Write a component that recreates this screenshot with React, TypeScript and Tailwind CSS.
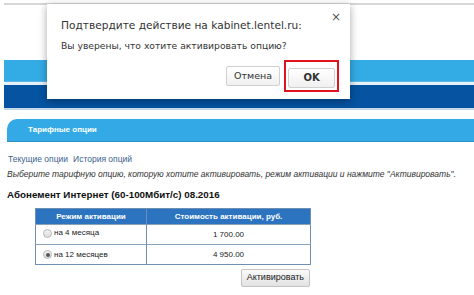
import React from 'react';

const rows = [
    { label: 'на 4 месяца', price: '1 700.00', checked: false },
    { label: 'на 12 месяцев', price: '4 950.00', checked: true },
];

const Radio = ({ checked }: { checked: boolean }) => (
    <span className="inline-flex w-[9px] h-[9px] rounded-full border border-[#b8b8b8] bg-gradient-to-b from-[#f4f4f4] to-[#dcdcdc] items-center justify-center mr-[2px]">
        {checked && <span className="w-[4px] h-[4px] rounded-full bg-[#555]" />}
    </span>
);

const ConfirmDialog = () => (
    <div className="absolute left-[47px] top-[4px] w-[303px] h-[95px] bg-white shadow-[0_2px_8px_rgba(0,0,0,0.35)] font-['DejaVu_Sans',sans-serif] text-[#333]">
        <div className="absolute right-[9px] top-[7px] text-[12px] text-[#555] leading-none">×</div>
        <div className="pl-[14px] pt-[14px] text-[10.6px] leading-[14px] whitespace-nowrap">Подтвердите действие на kabinet.lentel.ru:</div>
        <div className="pl-[14px] pt-[8px] text-[9.2px] leading-[12px] whitespace-nowrap">Вы уверены, что хотите активировать опцию?</div>
        <div className="absolute right-[11px] top-[56px] flex items-center gap-[4px]">
            <button className="w-[54px] h-[20px] rounded-[2px] border border-[#d0d0d0] bg-gradient-to-b from-white to-[#f0f0f0] text-[9.5px] text-[#333]">
                Отмена
            </button>
            <div className="border-2 border-[#e0141e] p-[2px]">
                <button className="w-[47px] h-[20px] rounded-[2px] border border-[#d0d0d0] bg-gradient-to-b from-white to-[#f0f0f0] text-[10px] font-bold text-[#333]">
                    OK
                </button>
            </div>
        </div>
    </div>
);

export default function App() {
    return (
        <div className="relative w-[474px] h-[295px] bg-white overflow-hidden font-['Liberation_Sans',Arial,sans-serif]">
            <div className="pl-[4px] pt-[3px]">
                <div className="h-[2px] bg-[#d6d6d6]" />
                <div className="h-[55px]" />
                <div className="h-[22px] bg-[#33ace6] border-b border-[#5cb8e4]" />
                <div className="h-[3px] bg-[#e6f1f8]" />
                <div className="h-[23px] bg-[#0553a1]" />
                <div className="h-[2px] bg-[#c5d9ea]" />
            </div>

            <div className="pl-[7px] pt-[9px]">
                <div className="h-[23px] bg-[#33aae5] border-b border-[#2990c8] rounded-tl-[10px] flex items-center pl-[21px] text-white font-bold text-[8px]">
                    Тарифные опции
                </div>
            </div>

            <div className="pl-[8px] pt-[11px] text-[8.5px] text-[#3c5f8e] leading-[12px] flex gap-[5px]">
                <span>Текущие опции</span>
                <span>История опций</span>
            </div>
            <div className="pl-[7px] pt-[3px] text-[8.5px] italic text-[#333] leading-[12px] whitespace-nowrap">
                Выберите тарифную опцию, которую хотите активировать, режим активации и нажмите "Активировать".
            </div>
            <div className="pl-[7px] pt-[8px] text-[9.8px] font-bold text-[#111] leading-[14px]">
                Абонемент Интернет (60-100Мбит/с) 08.2016
            </div>

            <div className="pl-[35px] pt-[6px] w-[311px]">
                <table className="w-[276px] border-collapse border border-[#6d8fb3] text-[8px] text-[#222]">
                    <thead>
                        <tr className="h-[16px] bg-[#2c74bf] text-white">
                            <th className="w-[111px] border-r border-[#6d8fb3] font-bold">Режим активации</th>
                            <th className="font-bold">Стоимость активации, руб.</th>
                        </tr>
                    </thead>
                    <tbody>
                        {rows.map((r) => (
                            <tr key={r.label} className="h-[20px] border-t border-[#8aa3bd]">
                                <td className="border-r border-[#6d8fb3] pl-[7px]">
                                    <span className="inline-flex items-center">
                                        <Radio checked={r.checked} />
                                        {r.label}
                                    </span>
                                </td>
                                <td className="text-center">{r.price}</td>
                            </tr>
                        ))}
                    </tbody>
                </table>
                <div className="flex justify-end pt-[4px] pr-[1px]">
                    <button className="h-[18px] px-[5px] border border-[#c4c4c4] rounded-[2px] bg-gradient-to-b from-[#fafafa] to-[#e2e2e2] text-[9px] text-[#222]">
                        Активировать
                    </button>
                </div>
            </div>

            <ConfirmDialog />
        </div>
    );
}
